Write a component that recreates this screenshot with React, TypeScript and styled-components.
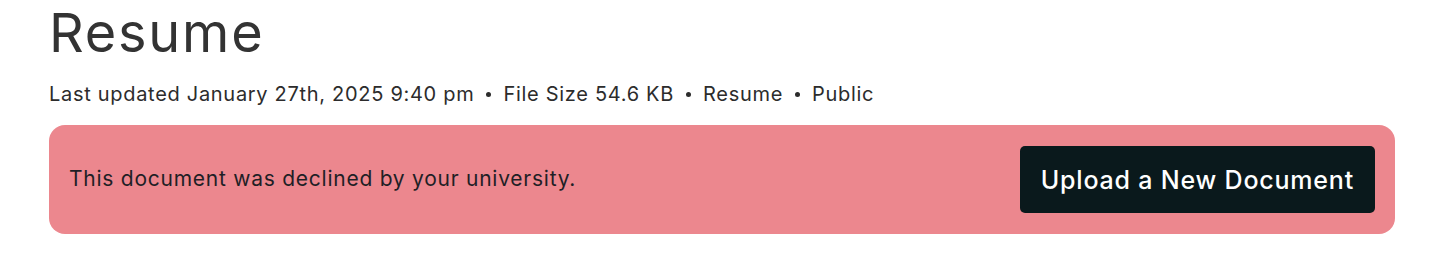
import React from "react";
import styled, { createGlobalStyle } from "styled-components";

const GlobalStyle = createGlobalStyle`
  body {
    margin: 0;
    background: #ffffff;
    font-family: Inter, "Liberation Sans", sans-serif;
  }
`;

const Page = styled.div`
  display: flex;
  flex-direction: column;
  padding: 0 49px;
  width: 1444px;
  box-sizing: border-box;
`;

const Title = styled.h1`
  margin: 0;
  font-size: 54px;
  font-weight: 400;
  line-height: 66px;
  color: #333333;
  letter-spacing: 1.8px;
`;

const Meta = styled.div`
  display: flex;
  align-items: center;
  gap: 10px;
  margin-top: 14px;
  font-size: 20px;
  line-height: 28px;
  letter-spacing: 0.7px;
  color: #2c2c2c;
`;

const Dot = styled.span`
  width: 5px;
  height: 5px;
  border-radius: 50%;
  background: #2c2c2c;
  margin: 0 2px;
`;

const Banner = styled.div`
  display: flex;
  align-items: center;
  justify-content: space-between;
  margin-top: 17px;
  height: 109px;
  padding: 0 20px;
  border-radius: 16px;
  background: #ec878e;
  box-sizing: border-box;
`;

const BannerText = styled.p`
  margin: 0 0 3px;
  font-size: 21px;
  letter-spacing: 0.75px;
  color: #1f1f26;
`;

const UploadButton = styled.button`
  height: 67px;
  padding: 0 21px;
  border: none;
  border-radius: 5px;
  background: #0a191c;
  color: #ffffff;
  font-family: inherit;
  font-size: 25px;
  font-weight: 500;
  letter-spacing: 0.8px;
  cursor: pointer;
`;

const metaItems = [
  "Last updated January 27th, 2025 9:40 pm",
  "File Size 54.6 KB",
  "Resume",
  "Public",
];

export default function App() {
  return (
    <>
      <GlobalStyle />
      <Page>
        <Title>Resume</Title>
        <Meta>
          {metaItems.map((item, i) => (
            <React.Fragment key={item}>
              {i > 0 && <Dot />}
              <span>{item}</span>
            </React.Fragment>
          ))}
        </Meta>
        <Banner>
          <BannerText>This document was declined by your university.</BannerText>
          <UploadButton>Upload a New Document</UploadButton>
        </Banner>
      </Page>
    </>
  );
}
